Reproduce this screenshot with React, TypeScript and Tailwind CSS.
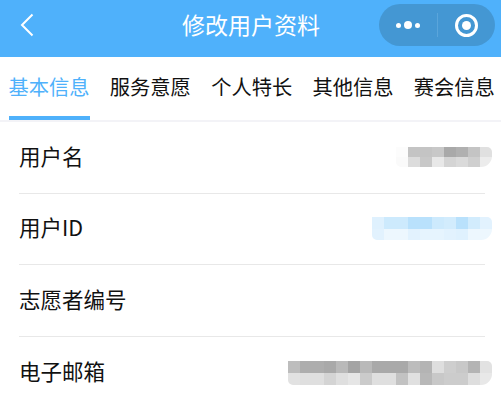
const font = { fontFamily: '"Noto Sans CJK SC", "Liberation Sans", sans-serif' };

const tabs = ["基本信息", "服务意愿", "个人特长", "其他信息", "赛会信息"];

type MosaicProps = { w: number; h: number; top: string[]; bottom: string[] };

function Mosaic({ w, h, top, bottom }: MosaicProps) {
  return (
    <div className="-mr-[7px] overflow-hidden rounded-tr-[5px] rounded-br-[11px] rounded-bl-[5px]">
      {[top, bottom].map((row, i) => (
        <div key={i} className="flex">
          {row.map((c, j) => (
            <div key={j} style={{ width: w, height: h, background: c }} />
          ))}
        </div>
      ))}
    </div>
  );
}

const rows: { label: string; mosaic?: MosaicProps }[] = [
  {
    label: "用户名",
    mosaic: {
      w: 12,
      h: 10,
      top: ["#fcfcfc", "#c4c4c4", "#c4c4c4", "#c8c8c8", "#a9a9a9", "#b0b0b0", "#c4c4c4", "#e0e0e0"],
      bottom: ["#fafafa", "#dcdcdc", "#c8c8c8", "#e8e8e8", "#d4d4d4", "#dadada", "#cfcfcf", "#ececec"],
    },
  },
  {
    label: "用户ID",
    mosaic: {
      w: 12,
      h: 11.5,
      top: ["#dff1fe", "#cdeafd", "#cdeafd", "#b9e1fc", "#b9e1fc", "#cdeafd", "#d2ecfd", "#b9e1fc", "#d2ecfd", "#e2f2fe"],
      bottom: ["#e2f2fe", "#edf7fe", "#edf7fe", "#e2f2fe", "#e6f4fe", "#e6f4fe", "#e2f2fe", "#dff1fe", "#edf7fe", "#edf7fe"],
    },
  },
  { label: "志愿者编号" },
  {
    label: "电子邮箱",
    mosaic: {
      w: 12,
      h: 12,
      top: ["#bdbdbd", "#adadad", "#adadad", "#a9a9a9", "#b9b9b9", "#a4a4a4", "#b9b9b9", "#a9a9a9", "#a9a9a9", "#a9a9a9", "#bcbcbc", "#b4b4b4", "#dedede", "#cecece", "#c8c8c8", "#b4b4b4", "#e2e2e2"],
      bottom: ["#e2e2e2", "#dfdfdf", "#dfdfdf", "#d4d4d4", "#dfdfdf", "#e6e6e6", "#cbcbcb", "#dfdfdf", "#dfdfdf", "#c2c2c2", "#e0e0e0", "#b8b8b8", "#c8c8c8", "#cccccc", "#cccccc", "#dedede", "#e8e8e8"],
    },
  },
];

export default function App() {
  return (
    <div className="h-[406px] w-[501px] overflow-hidden bg-white" style={font}>
      <header className="grid h-[57px] grid-cols-[1fr_auto_1fr] items-center bg-[#4fb1fb] pl-[20px] pr-[6px]">
        <svg width="14" height="24" viewBox="0 0 14 24" fill="none" className="-mt-[7px]">
          <path d="M12.5 1.5 2 12l10.5 10.5" stroke="white" strokeWidth="2" />
        </svg>
        <h1 className="-mt-[8px] mr-[13px] text-[23px] leading-none text-white">修改用户资料</h1>
        <div className="-mt-[7px] ml-auto flex h-[42px] w-[116px] items-center rounded-full bg-[#4497d3]">
          <div className="flex w-[58px] items-center justify-center gap-[3px]">
            <span className="h-[5px] w-[5px] rounded-full bg-white" />
            <span className="h-[8px] w-[8px] rounded-full bg-white" />
            <span className="h-[5px] w-[5px] rounded-full bg-white" />
          </div>
          <div className="h-[24px] w-px bg-[#5aa5db]" />
          <div className="flex flex-1 items-center justify-center">
            <div className="flex h-[23px] w-[23px] items-center justify-center rounded-full border-[3px] border-white">
              <span className="h-[9px] w-[9px] rounded-full bg-white" />
            </div>
          </div>
        </div>
      </header>

      <nav className="flex h-[63px] gap-[20.3px] pl-[8.5px]">
        {tabs.map((t, i) => (
          <div
            key={t}
            className={`flex h-full shrink-0 items-center whitespace-nowrap border-b-[4px] pt-[1px] text-[20.25px] leading-none ${
              i === 0 ? "border-[#4fb1fb] text-[#4fb1fb]" : "border-transparent text-[#111111]"
            }`}
          >
            {t}
          </div>
        ))}
      </nav>
      <div className="h-[2px] bg-[#f3f3f7]" />

      <main className="ml-[19px] mr-[16px]">
        {rows.map((r) => (
          <div
            key={r.label}
            className="flex h-[71.6px] items-center justify-between border-b border-[#e8e8e8] text-[21.5px] text-[#111111] last:border-b-0"
          >
            <span className="-mt-[4px] leading-none">{r.label}</span>
            {r.mosaic && <Mosaic {...r.mosaic} />}
          </div>
        ))}
      </main>
    </div>
  );
}
